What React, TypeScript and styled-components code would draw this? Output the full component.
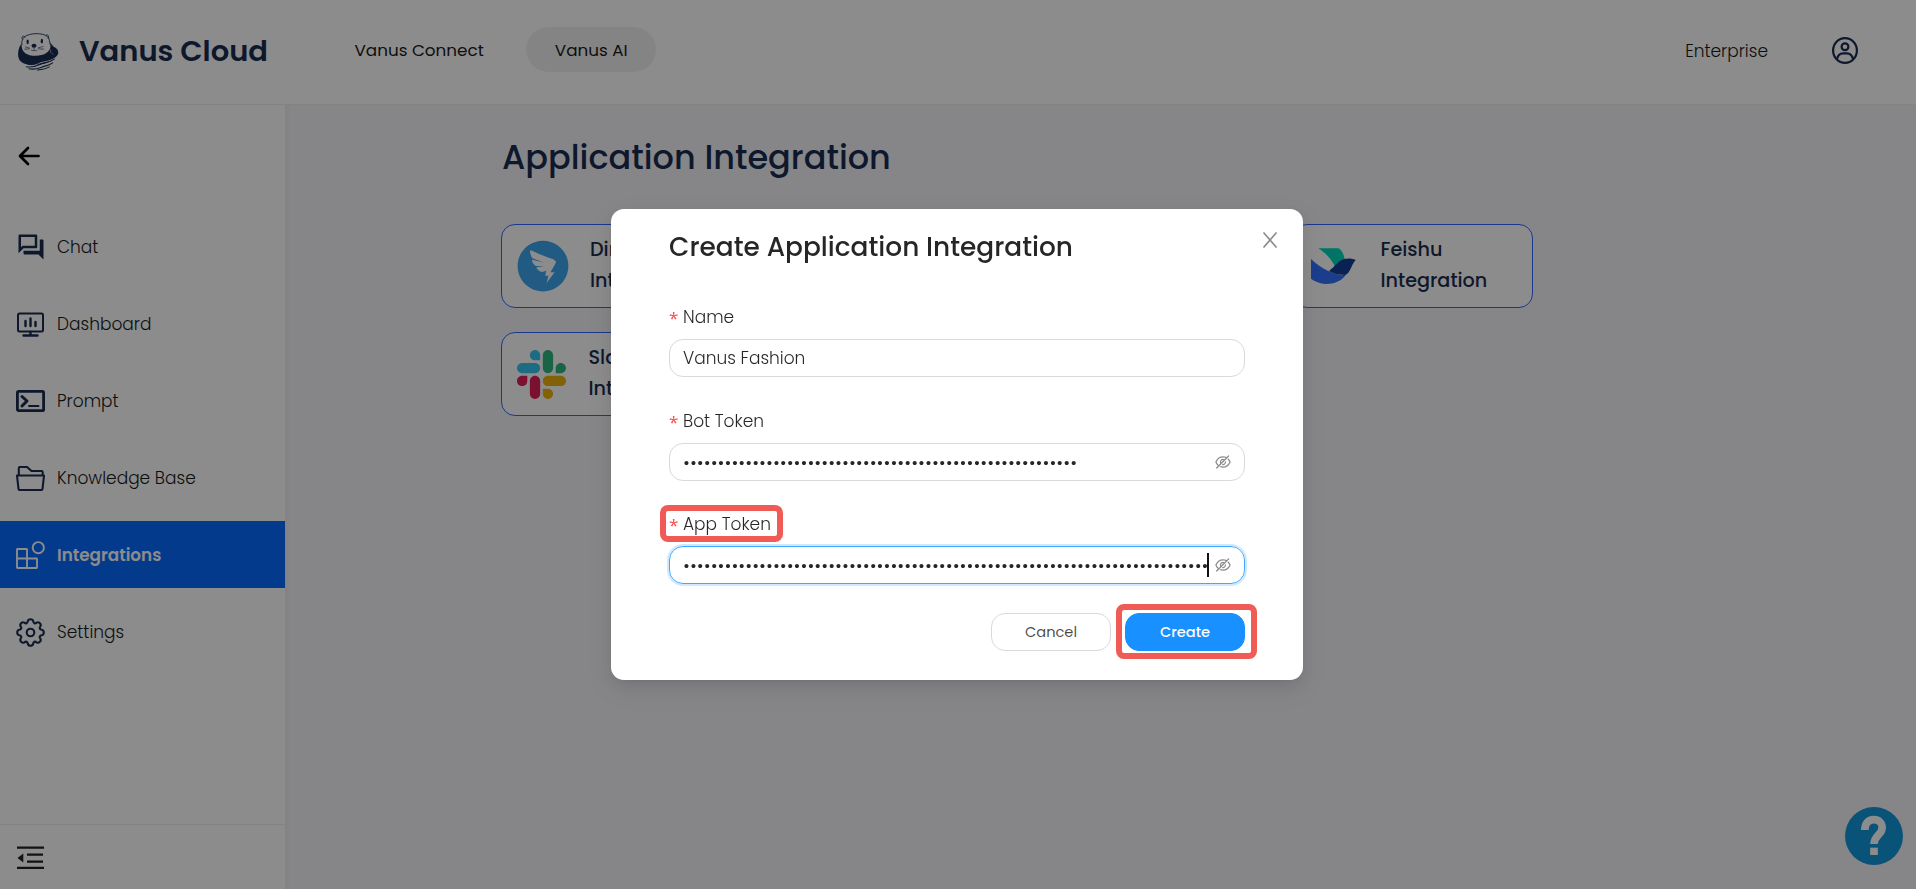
import React from 'react';
import styled, { createGlobalStyle } from 'styled-components';
import { MdOutlineQuestionAnswer } from 'react-icons/md';
import { AiFillDingtalkCircle, AiOutlineEyeInvisible } from 'react-icons/ai';

const navy = '#1b2d50';
const family = 'Poppins, Inter, "Liberation Sans", sans-serif';

const GlobalStyle = createGlobalStyle`
  * { box-sizing: border-box; }
  body { margin: 0; overflow: hidden; font-family: ${family}; color: #1a1a1a; }
`;

const Page = styled.div`
  height: 889px;
  display: grid;
  grid-template: 104px 1fr / 285px 1fr;
  background: #f4f4f8;
`;

const Header = styled.header`
  grid-column: 1 / 3;
  display: flex;
  align-items: center;
  background: #fff;
  box-shadow: 0 1px 1px #efeff1;
  padding: 0 58px 0 17px;
  z-index: 1;
`;

const Brand = styled.div`
  display: flex;
  align-items: center;
  gap: 20px;
  width: 309px;
  color: ${navy};
  font-size: 29px;
  font-weight: 600;
  padding-bottom: 2px;
`;

const NavItem = styled.div<{ $active?: boolean }>`
  height: 45px;
  line-height: 46px;
  padding: 0 28.5px;
  margin: 0 14px 5px 0;
  border-radius: 23px;
  font-size: 16.8px;
  white-space: nowrap;
  background: ${p => (p.$active ? '#f1f1f1' : 'transparent')};
`;

const Plan = styled.div`
  margin-left: auto;
  margin-right: 64px;
  font-size: 17px;
  font-weight: 300;
  padding-bottom: 3px;
`;

const Account = styled.div`
  display: flex;
  padding-bottom: 3px;
`;

const Sidebar = styled.aside`
  display: flex;
  flex-direction: column;
  background: #fff;
  box-shadow: 3px 0 4px rgba(0, 0, 0, 0.03);
`;

const Back = styled.div`
  height: 109px;
  padding: 41px 0 0 17px;
`;

const Menu = styled.nav`
  display: flex;
  flex-direction: column;
  gap: 10px;
`;

const MenuItem = styled.div<{ $active?: boolean }>`
  display: flex;
  align-items: center;
  gap: 11px;
  height: 67px;
  padding-left: 15px;
  font-size: ${p => (p.$active ? 16.8 : 17)}px;
  font-weight: ${p => (p.$active ? 600 : 300)};
  color: ${p => (p.$active ? '#fff' : '#1a1a1a')};
  background: ${p => (p.$active ? '#076bff' : 'transparent')};
`;

const IconSlot = styled.span<{ $active?: boolean }>`
  display: flex;
  justify-content: center;
  align-items: center;
  width: 31px;
  padding-top: 1px;
  color: ${p => (p.$active ? '#fff' : navy)};
`;

const Fold = styled.div`
  margin-top: auto;
  height: 65px;
  border-top: 1px solid #eee;
  padding: 21px 0 0 17px;
`;

const Main = styled.main`
  padding: 31px 0 0 216px;
`;

const Title = styled.h1`
  margin: 0 0 44px 1px;
  font-size: 33.5px;
  line-height: 45px;
  font-weight: 500;
  color: ${navy};
`;

const Cards = styled.div`
  display: grid;
  grid-template-columns: repeat(4, 240px);
  gap: 24px;
`;

const Card = styled.div<{ $offset?: number; $column?: number }>`
  grid-column: ${p => p.$column ?? 1};
  height: 84px;
  display: flex;
  align-items: center;
  gap: 22.5px;
  padding: 0 0 2px ${p => 15 + (p.$offset ?? 0)}px;
  border: 1px solid #3366ff;
  border-radius: 14px;
  background: #fff;
  color: ${navy};
  font-size: 19.2px;
  font-weight: 500;
  line-height: 31px;
`;

const Logo = styled.div`
  width: 49px;
  display: flex;
  justify-content: center;
  flex-shrink: 0;
  padding-top: 2px;

  svg { flex-shrink: 0; }
`;

const Help = styled.div`
  position: fixed;
  right: 13px;
  bottom: 24px;
  display: flex;
`;

const Mask = styled.div`
  position: fixed;
  inset: 0;
  z-index: 10;
  display: flex;
  justify-content: center;
  align-items: flex-start;
  padding: 209px 2px 0 0;
  background: rgba(0, 0, 0, 0.45);
`;

const Dialog = styled.div`
  position: relative;
  width: 692px;
  height: 471px;
  padding: 0 58px;
  border-radius: 13px;
  background: #fff;
  color: rgba(0, 0, 0, 0.85);
  box-shadow: 0 3px 6px -4px rgba(0, 0, 0, 0.12), 0 6px 16px rgba(0, 0, 0, 0.08), 0 9px 28px 8px rgba(0, 0, 0, 0.05);
`;

const DialogTitle = styled.h2`
  margin: 0;
  padding-top: 18px;
  height: 95px;
  font-size: 26.4px;
  line-height: 39px;
  font-weight: 500;
  white-space: nowrap;
`;

const Close = styled.div`
  position: absolute;
  top: 23px;
  right: 25px;
  display: flex;
`;

const Field = styled.div`
  height: 103.5px;
`;

const Label = styled.label`
  position: relative;
  display: flex;
  width: fit-content;
  align-items: center;
  gap: 5px;
  height: 26px;
  font-size: 17px;
  line-height: 26px;
  font-weight: 300;
`;

const Required = styled.span`
  width: 9px;
  padding-top: 2px;
  color: #ff4d4f;
  font: 17px/18px "Noto Sans", sans-serif;
`;

const InputBox = styled.div<{ $focused?: boolean }>`
  display: flex;
  align-items: center;
  height: 38px;
  margin-top: 9px;
  padding: 0 12px 0 13px;
  border: 1px solid ${p => (p.$focused ? '#40a9ff' : '#d9d9d9')};
  border-radius: 14px;
  font-size: 17px;
  font-weight: 300;
  box-shadow: ${p => (p.$focused ? '0 0 0 2px rgba(24,144,255,.2)' : 'none')};
`;

const Secret = styled.span`
  flex: 1;
  min-width: 0;
  white-space: nowrap;
  font: 400 16.8px/24px ${family};
`;

const Caret = styled.i`
  width: 2px;
  height: 24px;
  margin-right: 5px;
  background: #111;
`;

const Eye = styled.span`
  display: flex;
  color: #8c8c8c;
`;

const Footer = styled.div`
  display: flex;
  justify-content: flex-end;
  gap: 14px;
  margin-top: -1.5px;
`;

const Button = styled.button<{ $primary?: boolean }>`
  position: relative;
  width: 120px;
  height: 38px;
  padding: 0;
  border: 1px solid ${p => (p.$primary ? '#1890ff' : '#d9d9d9')};
  border-radius: 14px;
  background: ${p => (p.$primary ? '#1890ff' : '#fff')};
  color: ${p => (p.$primary ? '#fff' : 'rgba(0,0,0,.72)')};
  font: ${p => (p.$primary ? 500 : 400)} 14.6px ${family};
`;

const Marker = styled.span<{ $box: string }>`
  position: absolute;
  inset: ${p => p.$box};
  border: 6px solid #f15b55;
  border-radius: 8px;
`;

const OtterLogo = () => (
  <svg width="42" height="39" viewBox="50 90 126 116" fill="none" stroke={navy} strokeLinecap="round">
    <path fill={navy} stroke="none" d="M64 124C54 134 49 160 58 174C70 190 105 192 126 186C144 182 164 170 173 156C176 146 170 138 160 134L149 121C154 138 146 151 126 158C107 163 86 161 75 153C65 146 63 134 64 124Z" />
    <path strokeWidth="2.6" d="M65 127C62 118 67 110 73 104C86 92 128 91 141 103C149 111 147 120 150 128M66 111C62 102 69 100 74 104M137 100C142 95 147 100 144 109" />
    <ellipse cx="82" cy="119" rx="3.5" ry="7" fill={navy} stroke="none" />
    <ellipse cx="124.500" cy="117" rx="3.5" ry="7" fill={navy} stroke="none" />
    <ellipse cx="101" cy="131" rx="7.500" ry="6" fill={navy} stroke="none" />
    <path strokeWidth="1.8" d="M101 137v7M93 144c3 3 6 2 8 0c3 3 6 2 9 0M75 134l13 4M73 141l13-1M114 137l14-4M115 140l15 1" />
    <path strokeWidth="1.5" stroke="#fff" d="M151 143v8M155 153l3 3" />
    <path strokeWidth="2.800" stroke="#fff" d="M72 189C95 194 108 188 118 183S144 180 164 168M80 197C102 200 112 195 122 190S146 187 161 177" />
    <path strokeWidth="3.200" d="M78 194C98 197 110 191 120 186S146 183 162 171M86 200C104 203 114 199 124 195S144 191 157 182M112 204C124 201 132 203 147 194" />
  </svg>
);

const AccountIcon = () => (
  <svg width="26" height="27" viewBox="0 0 26 27" fill="none" stroke={navy} strokeWidth="2.2">
    <ellipse cx="13" cy="13.500" rx="11.900" ry="12.300" />
    <circle cx="13" cy="9.800" r="3.400" />
    <path d="M5 22C6 17.500 9 16.300 11 16.300h4C17 16.300 20 17.500 21 22" />
  </svg>
);

const BackIcon = () => (
  <svg width="24" height="22" viewBox="0 0 24 22" fill="none" stroke="#000" strokeWidth="2.7" strokeLinecap="round" strokeLinejoin="round">
    <path d="M11 3L3 11l8 8M3.500 11H21.500" />
  </svg>
);

const DashboardIcon = () => (
  <svg width="27" height="25" viewBox="0 0 27 25" fill="none" stroke="currentColor" strokeWidth="2" strokeLinecap="round">
    <rect x="1" y="1.500" width="25" height="18" rx="1.500" />
    <path strokeWidth="2.400" d="M8.500 9v5M13.500 6.500V14M18.500 10v4M13.500 20v3M6.500 23.500h14" />
  </svg>
);

const PromptIcon = () => (
  <svg width="29" height="22" viewBox="0 0 29 22" fill="none" stroke="currentColor" strokeWidth="2.800" strokeLinecap="round" strokeLinejoin="round">
    <rect x="1.400" y="1.400" width="26.200" height="19.200" rx="1.200" />
    <path d="M6 6.500l5 4.500-5 5" strokeWidth="3" />
    <path d="M13 16h9.500" strokeWidth="2" />
  </svg>
);

const FolderIcon = () => (
  <svg width="29" height="25" viewBox="0 0 29 25" fill="none" stroke="currentColor" strokeWidth="2.100" strokeLinejoin="round">
    <path d="M2.800 9V2.200Q2.800 1 4 1H11L15.500 5H25.500Q26.700 5 26.700 6.200V9" />
    <path d="M1 9.500H28L26.500 23Q26.400 24 25.400 24H3.600Q2.600 24 2.500 23Z" />
  </svg>
);

const IntegrationIcon = () => (
  <svg width="29" height="28" viewBox="0 0 29 28" fill="none" stroke="currentColor" strokeWidth="1.900" strokeLinejoin="round">
    <path d="M1 8.500Q1 8 1.500 8H10.500Q11 8 11 8.500V17.500H20.500Q21 17.500 21 18V26.500Q21 27 20.500 27H1.500Q1 27 1 26.500ZM1 17.500H11V27" />
    <circle cx="22.300" cy="6.700" r="5.600" />
  </svg>
);

const GearIcon = () => (
  <svg width="29" height="29" viewBox="0 0 29 29" fill="none" stroke="currentColor" strokeWidth="2.100" strokeLinejoin="round">
    <path d="M11.800 3.200C12.300 .6 16.700 .6 17.200 3.200C17.500 5.300 19 5.900 20.600 4.700C22.800 3.200 25.800 6.200 24.300 8.400C23.100 10 23.700 11.500 25.800 11.800C28.400 12.300 28.400 16.700 25.800 17.200C23.700 17.500 23.100 19 24.300 20.600C25.800 22.800 22.800 25.800 20.600 24.300C19 23.100 17.500 23.700 17.200 25.800C16.700 28.400 12.300 28.400 11.800 25.800C11.500 23.700 10 23.100 8.400 24.300C6.200 25.800 3.200 22.800 4.700 20.600C5.900 19 5.300 17.500 3.200 17.200C.6 16.700 .6 12.300 3.200 11.800C5.300 11.500 5.900 10 4.700 8.400C3.200 6.200 6.200 3.200 8.400 4.700C10 5.900 11.500 5.300 11.800 3.200Z" />
    <circle cx="14.500" cy="14.500" r="3.800" />
  </svg>
);

const FoldIcon = () => (
  <svg width="27" height="24" viewBox="0 0 27 24" fill="#222">
    <path d="M0 .5h27v2.300H0zM10 7.500h16v2.200H10zM10 14.500h16v2.200H10zM0 20.700h27V23H0zM.5 12L6.300 7.500v9z" />
  </svg>
);

const SlackIcon = () => (
  <svg width="49" height="49" viewBox="0 0 122.800 122.800">
    <path fill="#e01e5a" d="M25.800 77.600c0 7.100-5.800 12.900-12.900 12.900S0 84.700 0 77.600s5.800-12.900 12.900-12.900h12.900v12.900zm6.500 0c0-7.100 5.800-12.900 12.900-12.900s12.900 5.800 12.900 12.900v32.300c0 7.100-5.800 12.900-12.900 12.900s-12.900-5.800-12.900-12.900V77.600z" />
    <path fill="#36c5f0" d="M45.200 25.800c-7.100 0-12.900-5.800-12.900-12.900S38.100 0 45.200 0s12.900 5.800 12.900 12.900v12.900H45.200zm0 6.500c7.100 0 12.900 5.800 12.900 12.900s-5.800 12.900-12.900 12.900H12.900C5.800 58.100 0 52.300 0 45.200s5.800-12.900 12.900-12.900h32.300z" />
    <path fill="#2eb67d" d="M97 45.200c0-7.100 5.800-12.900 12.900-12.900s12.900 5.800 12.900 12.900-5.800 12.900-12.900 12.900H97V45.200zm-6.500 0c0 7.100-5.800 12.900-12.900 12.900s-12.900-5.800-12.900-12.900V12.900C64.700 5.800 70.500 0 77.600 0s12.900 5.800 12.900 12.900v32.300z" />
    <path fill="#ecb20e" d="M77.600 97c7.100 0 12.900 5.800 12.900 12.900s-5.800 12.900-12.900 12.900-12.900-5.800-12.900-12.900V97h12.900zm0-6.500c-7.100 0-12.900-5.800-12.900-12.900s5.800-12.900 12.900-12.900h32.300c7.100 0 12.900 5.800 12.900 12.900s-5.800 12.900-12.900 12.900H77.600z" />
  </svg>
);

const FeishuIcon = () => (
  <svg width="45" height="36" viewBox="153 147 135 108">
    <path fill="#00d6b9" d="M175 148H234C244 150 251 166 254 179C244 184 235 193 225 203C214 180 198 163 175 148Z" />
    <path fill="#3370ff" d="M153 180C175 201 200 219 245 229L262 222C246 247 222 255 198 255C180 254 164 247 153 239Z" />
    <path fill="#133c9a" d="M207 216C224 204 233 187 250 181C263 177 276 178 287 183C275 196 272 216 262 224C247 232 224 225 207 216Z" />
  </svg>
);

const HelpIcon = () => (
  <svg width="58" height="58" viewBox="135 81 174 174">
    <circle cx="222" cy="168" r="87" fill="#1296db" />
    <path d="M194.500 150C194.500 129 205 119 221 119C237 119 246.500 129 246.500 143C246.500 164 222 166 222 192" fill="none" stroke="#fff" strokeWidth="23" />
    <rect x="210.500" y="203" width="23" height="22" fill="#fff" />
  </svg>
);

const CloseIcon = () => (
  <svg width="16" height="16" viewBox="0 0 16 16" stroke="#8a8a8a" strokeWidth="1.600" fill="none">
    <path d="M1.500 .5L14.500 15.500M14.500 .5L1.500 15.500" />
  </svg>
);

const menu = [
  { name: 'Chat', icon: <MdOutlineQuestionAnswer size={30} /> },
  { name: 'Dashboard', icon: <DashboardIcon /> },
  { name: 'Prompt', icon: <PromptIcon /> },
  { name: 'Knowledge Base', icon: <FolderIcon /> },
  { name: 'Integrations', icon: <IntegrationIcon />, active: true },
  { name: 'Settings', icon: <GearIcon /> },
];

const cards = [
  { name: 'DingTalk', icon: <AiFillDingtalkCircle size={58} color="#3ca5ee" />, offset: 1.5 },
  { name: 'Feishu', icon: <FeishuIcon />, column: 4 },
  { name: 'Slack', icon: <SlackIcon /> },
];

export default function App() {
  return (
    <>
      <GlobalStyle />
      <Page>
        <Header>
          <Brand><OtterLogo />Vanus Cloud</Brand>
          <NavItem>Vanus Connect</NavItem>
          <NavItem $active>Vanus AI</NavItem>
          <Plan>Enterprise</Plan>
          <Account><AccountIcon /></Account>
        </Header>
        <Sidebar>
          <Back><BackIcon /></Back>
          <Menu>
            {menu.map(m => (
              <MenuItem key={m.name} $active={m.active}>
                <IconSlot $active={m.active}>{m.icon}</IconSlot>
                {m.name}
              </MenuItem>
            ))}
          </Menu>
          <Fold><FoldIcon /></Fold>
        </Sidebar>
        <Main>
          <Title>Application Integration</Title>
          <Cards>
            {cards.map(c => (
              <Card key={c.name} $offset={c.offset} $column={c.column}>
                <Logo>{c.icon}</Logo>
                <div>{c.name}<br />Integration</div>
              </Card>
            ))}
          </Cards>
        </Main>
      </Page>
      <Help><HelpIcon /></Help>
      <Mask>
        <Dialog>
          <DialogTitle>Create Application Integration</DialogTitle>
          <Close><CloseIcon /></Close>
          <Field>
            <Label><Required>*</Required>Name</Label>
            <InputBox>Vanus Fashion</InputBox>
          </Field>
          <Field>
            <Label><Required>*</Required>Bot Token</Label>
            <InputBox>
              <Secret>{'•'.repeat(57)}</Secret>
              <Eye><AiOutlineEyeInvisible size={18} /></Eye>
            </InputBox>
          </Field>
          <Field>
            <Label><Required>*</Required>App Token<Marker $box="-6px -12px -5px -9px" /></Label>
            <InputBox $focused>
              <Secret>{'•'.repeat(76)}</Secret>
              <Caret />
              <Eye><AiOutlineEyeInvisible size={18} /></Eye>
            </InputBox>
          </Field>
          <Footer>
            <Button>Cancel</Button>
            <Button $primary>Create<Marker $box="-10px -13px -9px -10px" /></Button>
          </Footer>
        </Dialog>
      </Mask>
    </>
  );
}
